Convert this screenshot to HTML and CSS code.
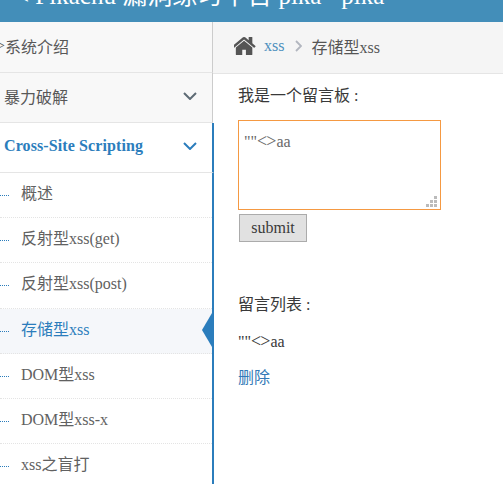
FILE: index.html
```html
<!doctype html>
<html lang="en">
<head>
	<meta charset="UTF-8">
	<title>存储型xss</title>
	<link rel="stylesheet" href="styles.css">
</head>
<body>
	<div class="navbar">
		<div class="brand"><span class="brand-arrow">&lt;</span> Pikachu 漏洞练习平台 pika~ pika~</div>
	</div>
	<div class="wrap">
		<div class="sidebar">
			<div class="nav-item nav-intro"><span class="nav-gt">&gt;</span>系统介绍</div>
			<div class="nav-item">
				<span>暴力破解</span>
				<svg class="nav-down" viewBox="0 0 14 8"><path d="M1 1l6 6 6-6"/></svg>
			</div>
			<div class="nav-item nav-open">
				<span>Cross-Site Scripting</span>
				<svg class="nav-down" viewBox="0 0 14 8"><path d="M1 1l6 6 6-6"/></svg>
			</div>
			<ul class="submenu">
				<li><a href="#">概述</a></li>
				<li><a href="#">反射型xss(get)</a></li>
				<li><a href="#">反射型xss(post)</a></li>
				<li class="active"><a href="#">存储型xss</a></li>
				<li><a href="#">DOM型xss</a></li>
				<li><a href="#">DOM型xss-x</a></li>
				<li><a href="#">xss之盲打</a></li>
			</ul>
		</div>
		<div class="main">
			<div class="crumbs">
				<svg class="home" viewBox="128 200 1536 1300"><path d="M1408 992v480q0 26-19 45t-45 19h-384v-384h-256v384h-384q-26 0-45-19t-19-45v-480q0-1 .5-3t.5-3l575-474 575 474q1 2 1 6zm223-69l-62 74q-8 9-21 11h-3q-13 0-21-7l-692-577-692 577q-12 8-24 7-13-2-21-11l-62-74q-8-10-7-23.5t11-21.5l719-599q32-26 76-26t76 26l244 204v-195q0-14 9-23t23-9h192q14 0 23 9t9 23v408l219 182q10 8 11 21.5t-7 23.5z"/></svg>
				<a href="#">xss</a>
				<svg class="crumb-sep" viewBox="0 0 7 12"><path d="M1 1l5 5-5 5"/></svg>
				<span>存储型xss</span>
			</div>
			<div class="content">
				<p class="board-title">我是一个留言板 :</p>
				<div class="msg-input" contenteditable="true">""<span class="lt">&lt;</span><span class="gt">&gt;</span>aa</div>
				<button class="submit-btn">submit</button>
				<p class="list-title">留言列表 :</p>
				<p class="msg-text">""<span class="lt">&lt;</span><span class="gt">&gt;</span>aa</p>
				<a class="del" href="#">删除</a>
			</div>
		</div>
	</div>
</body>
</html>
```

FILE: styles.css
```css
*{margin:0; padding:0; box-sizing:border-box;}
li{list-style:none;}
a{text-decoration:none;}

body{
	height:484px;
	overflow:hidden;
	background:#fff;
	font-family:"Liberation Serif","Noto Sans CJK SC",serif;
	font-size:16px;
	color:#393939;
}

.navbar{
	height:22px;
	background:#438eb9;
	overflow:hidden;
}
.brand{
	margin:-21px 0 0 15px;
	line-height:34px;
	font-size:25px;
	color:#fff;
	white-space:nowrap;
}

.wrap{display:flex;}

/*左边菜单*/
.sidebar{
	width:213px;
	flex-shrink:0;
	position:relative;
	z-index:1;
}
.nav-item{
	height:50px;
	display:flex;
	align-items:center;
	justify-content:space-between;
	padding:0 15px 3px 4px;
	background:#f8f8f8;
	border-right:1px solid #ccc;
	border-bottom:1px solid #e5e5e5;
	color:#585858;
}
.nav-intro{height:51px; justify-content:flex-start; padding-left:0;}
.nav-gt{margin-left:-4px; width:9px;}
.nav-open{
	background:#fff;
	color:#2b7dbc;
	font-weight:bold;
	letter-spacing:.1px;
	margin-right:-1px;
	border-right:2px solid #2b7dbc;
}
.nav-down{
	width:14px;
	height:8px;
	fill:none;
	stroke:#5e6b75;
	stroke-width:2;
}
.nav-open .nav-down{stroke:#2b7dbc;}

.submenu{
	margin-right:-1px;
	border-right:2px solid #2b7dbc;
	background:#fff;
}
.submenu li{
	height:45.2px;
	position:relative;
	border-bottom:1px dotted #e4e4e4;
}
.submenu li:before{
	content:"";
	position:absolute;
	left:0;
	top:22px;
	width:9px;
	border-top:1px dotted #2b7dbc;
}
.submenu a{
	display:block;
	padding-left:21px;
	line-height:42px;
	color:#616161;
}
.submenu .active{background:#f5f7fa;}
.submenu .active a{color:#2b7dbc;}
.submenu .active:after{
	content:"";
	position:absolute;
	right:0;
	top:4px;
	border-style:solid;
	border-width:17px 10px 17px 0;
	border-color:transparent #2b7dbc transparent transparent;
}

/*右边内容*/
.main{flex:1; min-width:0;}
.crumbs{
	height:52px;
	display:flex;
	align-items:center;
	padding:0 0 4px 21px;
	background:#f5f5f5;
	border-bottom:1px solid #e5e5e5;
	color:#555;
}
.home{
	width:22px;
	height:19px;
	fill:#555;
}
.crumbs a{margin-left:8px; color:#4c8fbd;}
.crumb-sep{
	width:7px;
	height:12px;
	margin:0 9px 0 11px;
	fill:none;
	stroke:#b2b6bf;
	stroke-width:1.8;
}

.content{padding:12px 0 0 25px;}
.board-title{line-height:20px;}
.msg-input{
	width:203px;
	height:90px;
	margin-top:14px;
	padding:11px 5px;
	border:1px solid #f59942;
	outline:none;
	overflow:auto;
	resize:both;
	line-height:20px;
	color:#696969;
}
.msg-input::-webkit-resizer{
	background:url("data:image/svg+xml,%3Csvg xmlns='http://www.w3.org/2000/svg' width='11' height='11' fill='%23bbb'%3E%3Cpath d='M8 0h3v3H8zM4 4h3v3H4zM8 4h3v3H8zM0 8h3v3H0zM4 8h3v3H4zM8 8h3v3H8z'/%3E%3C/svg%3E") no-repeat right 3px bottom 2px;
}
.lt,.gt{font-size:18px; line-height:1;}
.lt{letter-spacing:-1px;}
.submit-btn{
	display:block;
	width:68px;
	height:28px;
	margin:4px 0 0 1px;
	background:#e1e1e1;
	border:1px solid #ababab;
	font:16px "Liberation Serif",serif;
	color:#393939;
}
.list-title{margin-top:53px; line-height:20px;}
.msg-text{margin-top:17px; line-height:20px;}
.del{display:block; margin-top:16px; line-height:20px; color:#337ab7;}
```
